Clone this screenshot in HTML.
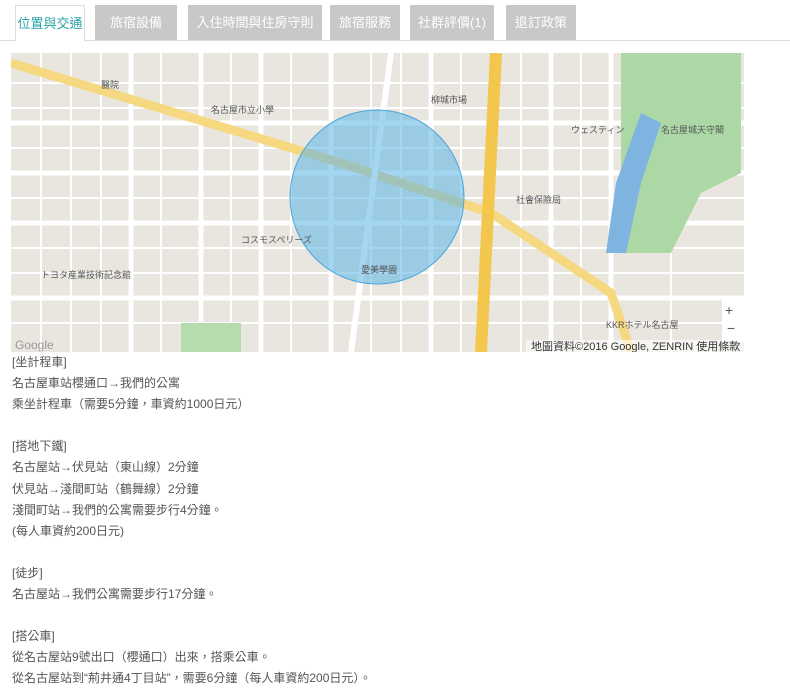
<!DOCTYPE html>
<html><head><meta charset="utf-8"><style>
body{margin:0;background:#fff;width:790px;height:697px;overflow:hidden;font-family:"Liberation Sans","Noto Sans CJK TC",sans-serif;}
.tabs{position:absolute;left:0;top:0;width:790px;height:40px;border-bottom:1px solid #ddd;}
.tab{position:absolute;top:5px;height:35px;line-height:35px;background:#c8c8c8;color:#fff;font-size:13px;text-align:center;}
.tab.act{background:#fff;color:#2aa3a8;border:1px solid #ddd;border-bottom:1px solid #fff;height:35px;top:5px}
.map{position:absolute;left:11px;top:53px;width:733px;height:299px;background:#ede9e0;overflow:hidden}
.txt{position:absolute;left:12px;top:352px;font-size:12px;color:#555;line-height:21.1px;}
</style></head><body>
<div class="tabs">
<div class="tab act" style="left:15px;width:68px">位置與交通</div>
<div class="tab" style="left:95px;width:82px">旅宿設備</div>
<div class="tab" style="left:188px;width:134px">入住時間與住房守則</div>
<div class="tab" style="left:330px;width:70px">旅宿服務</div>
<div class="tab" style="left:410px;width:84px">社群評價(1)</div>
<div class="tab" style="left:506px;width:70px">退訂政策</div>
</div>
<div class="map">
<svg width="733" height="299" viewBox="0 0 733 299">
<rect width="733" height="299" fill="#e9e6df"/>
<g stroke="#fff" stroke-width="2" fill="none">
<path d="M0 30H733M0 55H733M0 95H733M0 145H733M0 195H733M0 220H733M0 270H733M30 0V299M60 0V299M90 0V299M150 0V299M220 0V299M280 0V299M360 0V299M390 0V299M450 0V299M510 0V299M570 0V299M660 0V299"/>
</g>
<g stroke="#fff" stroke-width="5" fill="none">
<path d="M0 70H733M0 170H733M0 245H733M120 0V299M250 0V299M320 0V299M540 0V299M600 0V299M0 120H733M190 0V299M420 0V299"/>
</g>
<path d="M610 0h120v120l-40 20-30 60h-50z" fill="#acd8a6"/>
<path d="M630 60l-25 70-10 70h20l15-70 20-60z" fill="#7fb3e0"/>
<path d="M170 270h60v29h-60z" fill="#b6dcae"/>
<path d="M0 10L330 110 480 160 600 240 620 299" stroke="#f6d880" stroke-width="9" fill="none"/>
<path d="M485 0L470 299" stroke="#f3c74e" stroke-width="12" fill="none"/>
<path d="M380 0L340 299" stroke="#fff" stroke-width="6" fill="none"/>
<circle cx="366" cy="144" r="87" fill="#5ab4e6" fill-opacity=".55" stroke="#4aa6dc" stroke-width="1"/>
<g font-size="9" fill="#555"><text x="90" y="35">醫院</text><text x="200" y="60">名古屋市立小學</text><text x="420" y="50">柳城市場</text><text x="560" y="80">ウェスティン</text><text x="650" y="80">名古屋城天守閣</text><text x="505" y="150">社會保險局</text><text x="230" y="190">コスモスペリーズ</text><text x="350" y="220">愛美學園</text><text x="30" y="225">トヨタ産業技術記念館</text><text x="595" y="275">KKRホテル名古屋</text></g>
<rect x="711" y="245" width="22" height="44" fill="#fff"/>
<text x="714" y="262" font-size="14" fill="#555">+</text><text x="716" y="280" font-size="14" fill="#555">−</text>
<rect x="515" y="287" width="218" height="12" fill="#fff" opacity=".6"/>
<text x="520" y="297" font-size="11" fill="#333">地圖資料©2016 Google, ZENRIN  使用條款</text>
<text x="4" y="296" font-size="12" fill="#999">Google</text>
</svg>
</div>
<div class="txt">[坐計程車]<br>名古屋車站櫻通口→我們的公寓<br>乘坐計程車（需要5分鐘，車資約1000日元）<br><br>[搭地下鐵]<br>名古屋站→伏見站（東山線）2分鐘<br>伏見站→淺間町站（鶴舞線）2分鐘<br>淺間町站→我們的公寓需要步行4分鐘。<br>(每人車資約200日元)<br><br>[徒步]<br>名古屋站→我們公寓需要步行17分鐘。<br><br>[搭公車]<br>從名古屋站9號出口（櫻通口）出來，搭乘公車。<br>從名古屋站到“荊井通4丁目站”，需要6分鐘（每人車資約200日元）。</div>
</body></html>
